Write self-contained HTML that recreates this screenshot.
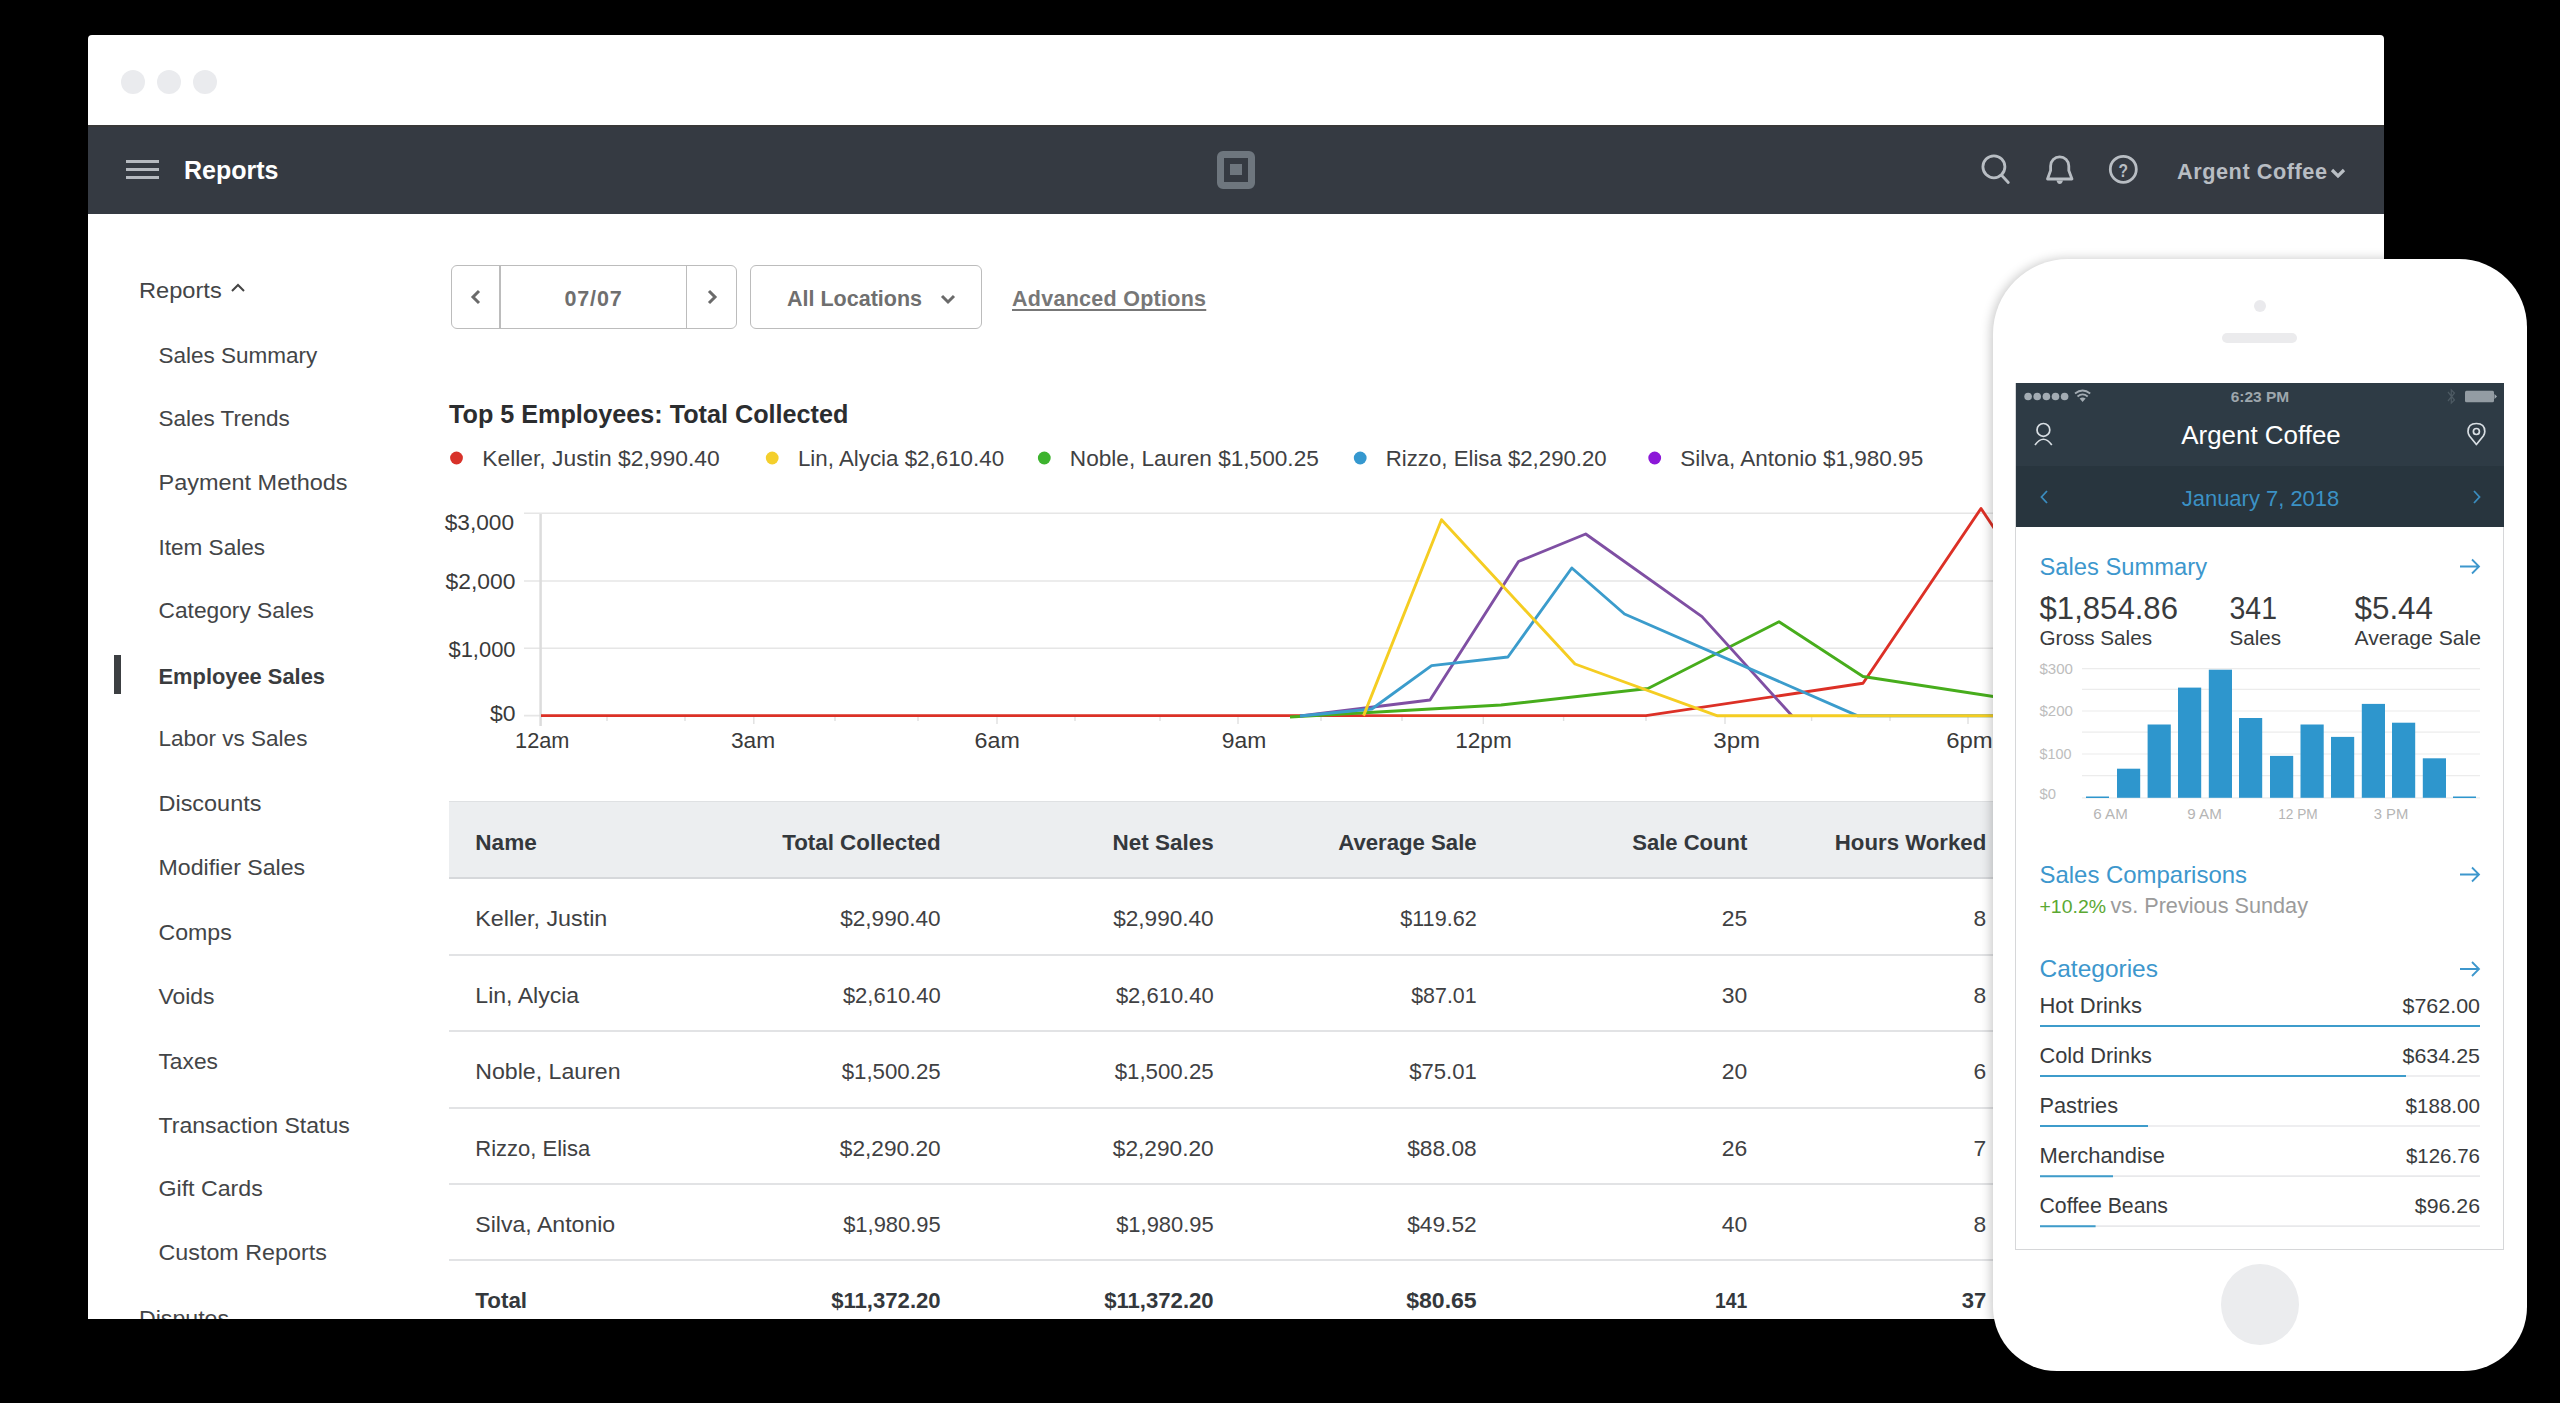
<!DOCTYPE html>
<html><head><meta charset="utf-8">
<style>
*{margin:0;padding:0;box-sizing:border-box}
html,body{width:2560px;height:1403px;overflow:hidden;background:#000}
body{position:relative;font-family:"Liberation Sans",sans-serif}
.a{position:absolute;white-space:nowrap}
#win{position:absolute;left:88px;top:35px;width:2296px;height:1283.6px;background:#fff;border-radius:4px 4px 0 0;overflow:hidden}
#wi{position:absolute;left:-88px;top:-35px;width:2560px;height:1403px}
.dot{position:absolute;width:24px;height:24px;border-radius:50%;background:#eaebee;top:69.5px}
#nav{position:absolute;left:88px;top:125px;width:2296px;height:89px;background:#353a42;border-top:2px solid #383838}
.side{position:absolute;left:158px;font-size:23px;color:#434547;line-height:30px;height:30px}
</style></head><body>
<div id="win"><div id="wi">
  <div class="dot" style="left:121.3px"></div>
  <div class="dot" style="left:157.4px"></div>
  <div class="dot" style="left:193.2px"></div>
  <div id="nav"></div>
  <!-- hamburger -->
  <div class="a" style="left:126.2px;top:160px;width:32.6px;height:3px;background:#b6bac0"></div>
  <div class="a" style="left:126.2px;top:168px;width:32.6px;height:3px;background:#b6bac0"></div>
  <div class="a" style="left:126.2px;top:176px;width:32.6px;height:3px;background:#b6bac0"></div>
  <div class="a" style="left:184px;top:155px;line-height:30px;font-size:25px;font-weight:bold;color:#fff">Reports</div>
  <!-- square logo -->
  <div class="a" style="left:1217px;top:150.5px;width:38px;height:38px;border:7.5px solid #6e767e;border-radius:6px"></div>
  <div class="a" style="left:1230px;top:164px;width:11.5px;height:11px;background:#6e767e"></div>
  <!-- nav icons -->
  <svg class="a" style="left:1960px;top:140px" width="200" height="60" viewBox="1960 140 200 60">
    <g fill="none" stroke="#b8bdc3" stroke-width="2.8" stroke-linecap="round">
      <circle cx="1993.9" cy="166.8" r="11"/>
      <line x1="2001.8" y1="175.5" x2="2008.3" y2="182.5"/>
      <path d="M2047.5 179 L2050.6 170.5 L2050.6 166 A9.1 9.1 0 0 1 2068.8 166 L2068.8 170.5 L2072 179 Z" stroke-linejoin="round"/>
      <circle cx="2123.3" cy="169.3" r="13"/>
    </g>
    <path d="M2056.5 180.5 L2063 180.5 Q2062 184 2059.7 184 Q2057.4 184 2056.5 180.5Z" fill="#b8bdc3"/>
    <text x="2123.3" y="176.8" font-family="Liberation Sans" font-weight="bold" font-size="19" fill="#b8bdc3" text-anchor="middle" textLength="9.5" lengthAdjust="spacingAndGlyphs">?</text>
  </svg>
  <div class="a" style="left:2177px;top:157px;line-height:30px;font-size:21.7px;font-weight:bold;letter-spacing:0.55px;color:#b8bdc3">Argent Coffee</div>
  <svg class="a" style="left:2330px;top:166.5px" width="16" height="12" viewBox="0 0 16 12"><path d="M2 3 L8 9 L14 3" fill="none" stroke="#b9bec4" stroke-width="3.2"/></svg>

  <!-- sidebar -->
  <svg class="a" style="left:100px;top:260px" width="300" height="1080" viewBox="100 260 300 1080">
    <g font-family="Liberation Sans" font-size="21.5" fill="#434547">
      <text x="139" y="298" textLength="82.7" lengthAdjust="spacingAndGlyphs">Reports</text>
      <text x="158.5" y="362.6" textLength="158.8" lengthAdjust="spacingAndGlyphs">Sales Summary</text>
      <text x="158.5" y="425.6" textLength="131.2" lengthAdjust="spacingAndGlyphs">Sales Trends</text>
      <text x="158.5" y="489.7" textLength="189.1" lengthAdjust="spacingAndGlyphs">Payment Methods</text>
      <text x="158.5" y="554.9" textLength="106.5" lengthAdjust="spacingAndGlyphs">Item Sales</text>
      <text x="158.5" y="617.9" textLength="155.5" lengthAdjust="spacingAndGlyphs">Category Sales</text>
      <text x="158.5" y="745.6" textLength="148.9" lengthAdjust="spacingAndGlyphs">Labor vs Sales</text>
      <text x="158.5" y="810.8" textLength="102.9" lengthAdjust="spacingAndGlyphs">Discounts</text>
      <text x="158.5" y="874.9" textLength="146.7" lengthAdjust="spacingAndGlyphs">Modifier Sales</text>
      <text x="158.5" y="940.1" textLength="73.3" lengthAdjust="spacingAndGlyphs">Comps</text>
      <text x="158.5" y="1003.8" textLength="56.1" lengthAdjust="spacingAndGlyphs">Voids</text>
      <text x="158.5" y="1068.9" textLength="59.4" lengthAdjust="spacingAndGlyphs">Taxes</text>
      <text x="158.5" y="1133.0" textLength="191.3" lengthAdjust="spacingAndGlyphs">Transaction Status</text>
      <text x="158.5" y="1196.0" textLength="104.3" lengthAdjust="spacingAndGlyphs">Gift Cards</text>
      <text x="158.5" y="1260.1" textLength="168.3" lengthAdjust="spacingAndGlyphs">Custom Reports</text>
      <text x="139" y="1326" textLength="90" lengthAdjust="spacingAndGlyphs">Disputes</text>
    </g>
    <text x="158.5" y="683.8" font-family="Liberation Sans" font-size="21.3" font-weight="bold" fill="#3a3c3e" textLength="166.5" lengthAdjust="spacingAndGlyphs">Employee Sales</text>
  </svg>
  <svg class="a" style="left:229px;top:281px" width="18" height="14" viewBox="0 0 18 14"><path d="M3 10 L9 4 L15 10" fill="none" stroke="#444" stroke-width="2"/></svg>
  <div class="a" style="left:114px;top:655px;width:7px;height:39px;background:#3c3f42"></div>
  <!-- controls -->
  <div class="a" style="left:450.5px;top:265.3px;width:286px;height:63.3px;border:1.7px solid #bcbcbc;border-radius:6px"></div>
  <div class="a" style="left:499.2px;top:266px;width:1.7px;height:62px;background:#bcbcbc"></div>
  <div class="a" style="left:685.8px;top:266px;width:1.7px;height:62px;background:#bcbcbc"></div>
  <svg class="a" style="left:466px;top:287px" width="20" height="20" viewBox="0 0 20 20"><path d="M13 4 L7 10 L13 16" fill="none" stroke="#6a6a6a" stroke-width="3"/></svg>
  <svg class="a" style="left:702px;top:287px" width="20" height="20" viewBox="0 0 20 20"><path d="M7 4 L13 10 L7 16" fill="none" stroke="#6a6a6a" stroke-width="3"/></svg>
  <div class="a" style="left:501px;top:284px;width:185px;text-align:center;line-height:30px;font-size:21.5px;font-weight:bold;letter-spacing:0.8px;color:#6f6f6f">07/07</div>
  <div class="a" style="left:750px;top:265.3px;width:232px;height:63.3px;border:1.7px solid #bcbcbc;border-radius:6px"></div>
  <div class="a" style="left:787px;top:284px;line-height:30px;font-size:21.5px;font-weight:bold;color:#6f6f6f">All Locations</div>
  <svg class="a" style="left:939px;top:291.5px" width="18" height="14" viewBox="0 0 18 14"><path d="M3 4 L9 10 L15 4" fill="none" stroke="#6a6a6a" stroke-width="3"/></svg>
  <div class="a" style="left:1012px;top:284px;line-height:30px;font-size:21.5px;font-weight:bold;letter-spacing:0.27px;color:#777;text-decoration:underline;text-decoration-thickness:1.5px;text-underline-offset:3px;text-decoration-skip-ink:none">Advanced Options</div>

  <!-- chart -->
  <div class="a" style="left:449px;top:399px;line-height:30px;font-size:25.2px;font-weight:bold;color:#2b2d2f">Top 5 Employees: Total Collected</div>
  <svg class="a" style="left:440px;top:440px" width="1500" height="36" viewBox="440 440 1500 36">
    <circle cx="456.5" cy="458" r="6.4" fill="#d8322a"/>
    <text x="482.2" y="466" font-family="Liberation Sans" font-size="22.7" fill="#3f4143" textLength="237.5" lengthAdjust="spacingAndGlyphs">Keller, Justin $2,990.40</text>
    <circle cx="772.2" cy="458" r="6.4" fill="#f4cf2c"/>
    <text x="797.9000000000001" y="466" font-family="Liberation Sans" font-size="22.7" fill="#3f4143" textLength="206.2" lengthAdjust="spacingAndGlyphs">Lin, Alycia $2,610.40</text>
    <circle cx="1044.3" cy="458" r="6.4" fill="#3db32e"/>
    <text x="1069.8" y="466" font-family="Liberation Sans" font-size="22.7" fill="#3f4143" textLength="249.0" lengthAdjust="spacingAndGlyphs">Noble, Lauren $1,500.25</text>
    <circle cx="1360.2" cy="458" r="6.4" fill="#3598cf"/>
    <text x="1385.8" y="466" font-family="Liberation Sans" font-size="22.7" fill="#3f4143" textLength="220.9" lengthAdjust="spacingAndGlyphs">Rizzo, Elisa $2,290.20</text>
    <circle cx="1654.7" cy="458" r="6.4" fill="#8c18d8"/>
    <text x="1680.2" y="466" font-family="Liberation Sans" font-size="22.7" fill="#3f4143" textLength="243.0" lengthAdjust="spacingAndGlyphs">Silva, Antonio $1,980.95</text>
  </svg>
  <svg class="a" style="left:420px;top:490px" width="1580" height="280" viewBox="420 490 1580 280">
    <g stroke="#e6e6e6" stroke-width="1.6">
      <line x1="524" y1="513.2" x2="2000" y2="513.2"/>
      <line x1="524" y1="581" x2="2000" y2="581"/>
      <line x1="524" y1="648.3" x2="2000" y2="648.3"/>
      <line x1="524" y1="715.6" x2="2000" y2="715.6"/>
    </g>
    <line x1="540.6" y1="514" x2="540.6" y2="726" stroke="#dcdcdc" stroke-width="2.5"/>
    <g stroke="#e0e0e0" stroke-width="1.4">
      <line x1="607" y1="716" x2="607" y2="721"/><line x1="685" y1="716" x2="685" y2="721"/>
      <line x1="753.8" y1="716" x2="753.8" y2="724"/>
      <line x1="835" y1="716" x2="835" y2="721"/><line x1="918" y1="716" x2="918" y2="721"/>
      <line x1="997" y1="716" x2="997" y2="724"/>
      <line x1="1075" y1="716" x2="1075" y2="721"/><line x1="1160" y1="716" x2="1160" y2="721"/>
      <line x1="1238" y1="716" x2="1238" y2="724"/>
      <line x1="1321" y1="716" x2="1321" y2="721"/><line x1="1402" y1="716" x2="1402" y2="721"/>
      <line x1="1483.3" y1="716" x2="1483.3" y2="724"/>
      <line x1="1563.6" y1="716" x2="1563.6" y2="721"/><line x1="1646" y1="716" x2="1646" y2="721"/>
      <line x1="1725" y1="716" x2="1725" y2="724"/>
      <line x1="1811.6" y1="716" x2="1811.6" y2="721"/><line x1="1890" y1="716" x2="1890" y2="721"/>
      <line x1="1968" y1="716" x2="1968" y2="724"/>
    </g>
    <g fill="none" stroke-width="2.9" stroke-linejoin="round">
            <polyline stroke="#dc3026" points="541,715.6 1646,715.6 1863,683.3 1981,508.5 2000,537"/>
      <polyline stroke="#47ad1c" points="1290,717 1501,705 1648,688.5 1779,621.7 1863,676.5 2000,697.5"/>
      <polyline stroke="#7f4fa3" points="1300,716 1430,700 1518.5,561.5 1585.7,534 1702,616.6 1792,715.8"/>
      <polyline stroke="#3b9ccc" points="1300,716 1371.8,709 1431.6,665.6 1507.9,657 1571.8,568 1624.5,614 1857.8,715.8 2000,715.8"/>
      <polyline stroke="#f5cd22" points="1363.6,715.6 1441.5,519.7 1575,664 1717.5,715.8 2000,715.8"/>
    </g>
    <g font-family="Liberation Sans" font-size="21.5" fill="#3a3a3a" text-anchor="end">
      <text x="514" y="529.5" textLength="69.3" lengthAdjust="spacingAndGlyphs">$3,000</text>
      <text x="515.5" y="588.5" textLength="69.9" lengthAdjust="spacingAndGlyphs">$2,000</text>
      <text x="515.5" y="657" textLength="67" lengthAdjust="spacingAndGlyphs">$1,000</text>
      <text x="515.5" y="720.5" textLength="25.5" lengthAdjust="spacingAndGlyphs">$0</text>
    </g>
    <g font-family="Liberation Sans" font-size="21.5" fill="#3a3a3a" text-anchor="middle">
      <text x="542.3" y="748" textLength="54.4" lengthAdjust="spacingAndGlyphs">12am</text>
      <text x="753" y="748" textLength="44.2" lengthAdjust="spacingAndGlyphs">3am</text>
      <text x="997.2" y="748" textLength="45.2" lengthAdjust="spacingAndGlyphs">6am</text>
      <text x="1244" y="748" textLength="44.5" lengthAdjust="spacingAndGlyphs">9am</text>
      <text x="1483.5" y="748" textLength="56.5" lengthAdjust="spacingAndGlyphs">12pm</text>
      <text x="1736.7" y="748" textLength="46.9" lengthAdjust="spacingAndGlyphs">3pm</text>
      <text x="1969.5" y="748" textLength="46.5" lengthAdjust="spacingAndGlyphs">6pm</text>
    </g>
  </svg>

  <!-- table -->
  <div class="a" style="left:449px;top:801px;width:1560px;height:78px;background:#eceef0;border-top:1.5px solid #dfe1e3;border-bottom:2px solid #d6d8db"></div>
  <div class="a" style="left:449px;top:953.7px;width:1560px;height:2px;background:#e2e3e5"></div>
  <div class="a" style="left:449px;top:1030.0px;width:1560px;height:2px;background:#e2e3e5"></div>
  <div class="a" style="left:449px;top:1106.8px;width:1560px;height:2px;background:#e2e3e5"></div>
  <div class="a" style="left:449px;top:1182.8px;width:1560px;height:2px;background:#e2e3e5"></div>
  <div class="a" style="left:449px;top:1259.0px;width:1560px;height:2px;background:#e2e3e5"></div>
  <svg class="a" style="left:440px;top:800px" width="1560" height="520" viewBox="440 800 1560 520">
    <g font-family="Liberation Sans">
      <text x="475.3" y="849.8" font-weight="bold" font-size="21.4" fill="#34383c" textLength="61.5" lengthAdjust="spacingAndGlyphs">Name</text>
      <text x="940.7" y="849.8" text-anchor="end" font-weight="bold" font-size="21.4" fill="#34383c" textLength="158.5" lengthAdjust="spacingAndGlyphs">Total Collected</text>
      <text x="1213.7" y="849.8" text-anchor="end" font-weight="bold" font-size="21.4" fill="#34383c" textLength="101.1" lengthAdjust="spacingAndGlyphs">Net Sales</text>
      <text x="1476.7" y="849.8" text-anchor="end" font-weight="bold" font-size="21.4" fill="#34383c" textLength="138.5" lengthAdjust="spacingAndGlyphs">Average Sale</text>
      <text x="1747.3" y="849.8" text-anchor="end" font-weight="bold" font-size="21.4" fill="#34383c" textLength="115.1" lengthAdjust="spacingAndGlyphs">Sale Count</text>
      <text x="1986.3" y="849.8" text-anchor="end" font-weight="bold" font-size="21.4" fill="#34383c" textLength="151.5" lengthAdjust="spacingAndGlyphs">Hours Worked</text>
      <text x="475.3" y="926.2" font-size="22.4" fill="#3f4143" textLength="132.0" lengthAdjust="spacingAndGlyphs">Keller, Justin</text>
      <text x="940.7" y="926.2" text-anchor="end" font-size="22.4" fill="#3f4143" textLength="100.5" lengthAdjust="spacingAndGlyphs">$2,990.40</text>
      <text x="1213.7" y="926.2" text-anchor="end" font-size="22.4" fill="#3f4143" textLength="100.5" lengthAdjust="spacingAndGlyphs">$2,990.40</text>
      <text x="1476.7" y="926.2" text-anchor="end" font-size="22.4" fill="#3f4143" textLength="76.5" lengthAdjust="spacingAndGlyphs">$119.62</text>
      <text x="1747.3" y="926.2" text-anchor="end" font-size="22.4" fill="#3f4143" textLength="25.5" lengthAdjust="spacingAndGlyphs">25</text>
      <text x="1986.3" y="926.2" text-anchor="end" font-size="22.4" fill="#3f4143" textLength="12.7" lengthAdjust="spacingAndGlyphs">8</text>
      <text x="475.3" y="1002.7" font-size="22.4" fill="#3f4143" textLength="103.9" lengthAdjust="spacingAndGlyphs">Lin, Alycia</text>
      <text x="940.7" y="1002.7" text-anchor="end" font-size="22.4" fill="#3f4143" textLength="97.8" lengthAdjust="spacingAndGlyphs">$2,610.40</text>
      <text x="1213.7" y="1002.7" text-anchor="end" font-size="22.4" fill="#3f4143" textLength="97.8" lengthAdjust="spacingAndGlyphs">$2,610.40</text>
      <text x="1476.7" y="1002.7" text-anchor="end" font-size="22.4" fill="#3f4143" textLength="65.5" lengthAdjust="spacingAndGlyphs">$87.01</text>
      <text x="1747.3" y="1002.7" text-anchor="end" font-size="22.4" fill="#3f4143" textLength="25.5" lengthAdjust="spacingAndGlyphs">30</text>
      <text x="1986.3" y="1002.7" text-anchor="end" font-size="22.4" fill="#3f4143" textLength="12.7" lengthAdjust="spacingAndGlyphs">8</text>
      <text x="475.3" y="1079.2" font-size="22.4" fill="#3f4143" textLength="145.3" lengthAdjust="spacingAndGlyphs">Noble, Lauren</text>
      <text x="940.7" y="1079.2" text-anchor="end" font-size="22.4" fill="#3f4143" textLength="99.0" lengthAdjust="spacingAndGlyphs">$1,500.25</text>
      <text x="1213.7" y="1079.2" text-anchor="end" font-size="22.4" fill="#3f4143" textLength="99.0" lengthAdjust="spacingAndGlyphs">$1,500.25</text>
      <text x="1476.7" y="1079.2" text-anchor="end" font-size="22.4" fill="#3f4143" textLength="67.5" lengthAdjust="spacingAndGlyphs">$75.01</text>
      <text x="1747.3" y="1079.2" text-anchor="end" font-size="22.4" fill="#3f4143" textLength="25.5" lengthAdjust="spacingAndGlyphs">20</text>
      <text x="1986.3" y="1079.2" text-anchor="end" font-size="22.4" fill="#3f4143" textLength="12.7" lengthAdjust="spacingAndGlyphs">6</text>
      <text x="475.3" y="1155.7" font-size="22.4" fill="#3f4143" textLength="114.9" lengthAdjust="spacingAndGlyphs">Rizzo, Elisa</text>
      <text x="940.7" y="1155.7" text-anchor="end" font-size="22.4" fill="#3f4143" textLength="100.9" lengthAdjust="spacingAndGlyphs">$2,290.20</text>
      <text x="1213.7" y="1155.7" text-anchor="end" font-size="22.4" fill="#3f4143" textLength="100.9" lengthAdjust="spacingAndGlyphs">$2,290.20</text>
      <text x="1476.7" y="1155.7" text-anchor="end" font-size="22.4" fill="#3f4143" textLength="69.5" lengthAdjust="spacingAndGlyphs">$88.08</text>
      <text x="1747.3" y="1155.7" text-anchor="end" font-size="22.4" fill="#3f4143" textLength="25.5" lengthAdjust="spacingAndGlyphs">26</text>
      <text x="1986.3" y="1155.7" text-anchor="end" font-size="22.4" fill="#3f4143" textLength="12.7" lengthAdjust="spacingAndGlyphs">7</text>
      <text x="475.3" y="1232.2" font-size="22.4" fill="#3f4143" textLength="139.9" lengthAdjust="spacingAndGlyphs">Silva, Antonio</text>
      <text x="940.7" y="1232.2" text-anchor="end" font-size="22.4" fill="#3f4143" textLength="97.5" lengthAdjust="spacingAndGlyphs">$1,980.95</text>
      <text x="1213.7" y="1232.2" text-anchor="end" font-size="22.4" fill="#3f4143" textLength="97.5" lengthAdjust="spacingAndGlyphs">$1,980.95</text>
      <text x="1476.7" y="1232.2" text-anchor="end" font-size="22.4" fill="#3f4143" textLength="69.5" lengthAdjust="spacingAndGlyphs">$49.52</text>
      <text x="1747.3" y="1232.2" text-anchor="end" font-size="22.4" fill="#3f4143" textLength="25.5" lengthAdjust="spacingAndGlyphs">40</text>
      <text x="1986.3" y="1232.2" text-anchor="end" font-size="22.4" fill="#3f4143" textLength="12.7" lengthAdjust="spacingAndGlyphs">8</text>
      <text x="475.3" y="1308.3" font-weight="bold" font-size="21.4" fill="#34383c" textLength="51.8" lengthAdjust="spacingAndGlyphs">Total</text>
      <text x="940.7" y="1308.3" text-anchor="end" font-weight="bold" font-size="21.4" fill="#34383c" textLength="109.5" lengthAdjust="spacingAndGlyphs">$11,372.20</text>
      <text x="1213.7" y="1308.3" text-anchor="end" font-weight="bold" font-size="21.4" fill="#34383c" textLength="109.5" lengthAdjust="spacingAndGlyphs">$11,372.20</text>
      <text x="1476.7" y="1308.3" text-anchor="end" font-weight="bold" font-size="21.4" fill="#34383c" textLength="70.5" lengthAdjust="spacingAndGlyphs">$80.65</text>
      <text x="1747.3" y="1308.3" text-anchor="end" font-weight="bold" font-size="21.4" fill="#34383c" textLength="32.3" lengthAdjust="spacingAndGlyphs">141</text>
      <text x="1986.3" y="1308.3" text-anchor="end" font-weight="bold" font-size="21.4" fill="#34383c" textLength="24.5" lengthAdjust="spacingAndGlyphs">37</text>
    </g>
  </svg>
</div></div>

<!-- phone -->
<div class="a" style="left:1993px;top:258.5px;width:533.5px;height:1112px;background:#fff;border-radius:75px 68px 64px 64px;box-shadow:-2px 0 11px rgba(0,0,0,0.22)"></div>
<div class="a" style="left:2254px;top:299.5px;width:12px;height:12px;border-radius:50%;background:#eaeaed"></div>
<div class="a" style="left:2222px;top:332.5px;width:74.5px;height:10px;border-radius:5px;background:#ebebed"></div>
<div class="a" style="left:2221px;top:1263.5px;width:77.7px;height:81px;border-radius:50%;background:#ebecee"></div>
<div class="a" style="left:2014.6px;top:383.3px;width:489.8px;height:866.3px;background:#fff;border:1.4px solid #d6d7d9;border-top:none"></div>
<div class="a" style="left:2015.5px;top:383.3px;width:488.5px;height:82.5px;background:#2e3b45"></div>
<div class="a" style="left:2015.5px;top:465.8px;width:488.5px;height:61.2px;background:#28353e"></div>
<svg class="a" style="left:2015px;top:383px" width="490" height="145" viewBox="2015 383 490 145">
  <g fill="#a3acb3">
    <circle cx="2028.1" cy="396.5" r="3.8"/><circle cx="2037.2" cy="396.5" r="3.8"/><circle cx="2046.4" cy="396.5" r="3.8"/><circle cx="2055.5" cy="396.5" r="3.8"/><circle cx="2064.6" cy="396.5" r="3.8"/>
    <path d="M2082.6 402 L2079.6 398.6 Q2082.6 396.4 2085.6 398.6 Z"/>
    <rect x="2465" y="390.8" width="29" height="11.5" rx="1.5" fill="#939ca3"/>
    <path d="M2494.5 394 L2497 396.5 L2494.5 399 Z"/>
  </g>
  <g fill="none" stroke="#a3acb3" stroke-width="1.8">
    <path d="M2077.5 396.5 Q2082.6 392.3 2087.7 396.5"/>
    <path d="M2075 393.5 Q2082.6 387.5 2090.2 393.5"/>
  </g>
  <path d="M2448 392 L2454.5 400 L2451.3 403 L2451.3 390 L2454.5 393 L2448 401" fill="none" stroke="#4d5a63" stroke-width="1.2"/>
  <text x="2260" y="401.5" font-family="Liberation Sans" font-size="15" font-weight="bold" fill="#9ea7ad" text-anchor="middle" textLength="58.5" lengthAdjust="spacingAndGlyphs">6:23 PM</text>
  <g fill="none" stroke="#d8dee3" stroke-width="1.7">
    <circle cx="2043.4" cy="429.9" r="6.4"/>
    <path d="M2035 445 Q2043.4 433.5 2051.8 445"/>
    <path d="M2476.4 444.5 L2469.5 436 Q2468 433.5 2468 431.5 Q2468 423.5 2476.4 423.5 Q2484.8 423.5 2484.8 431.5 Q2484.8 433.5 2483.3 436 Z" stroke-linejoin="round"/>
    <circle cx="2476.4" cy="431.5" r="3"/>
  </g>
  <g fill="none" stroke="#3a8cbf" stroke-width="1.8">
    <path d="M2047 491 L2041.5 497 L2047 503"/>
    <path d="M2474 491 L2479.5 497 L2474 503"/>
  </g>
  <text x="2261" y="443.5" font-family="Liberation Sans" font-size="25.7" fill="#ffffff" text-anchor="middle" textLength="159.5" lengthAdjust="spacingAndGlyphs">Argent Coffee</text>
  <text x="2260.5" y="505.5" font-family="Liberation Sans" font-size="21.8" fill="#3b91c5" text-anchor="middle" textLength="157.5" lengthAdjust="spacingAndGlyphs">January 7, 2018</text>
</svg>

<svg class="a" style="left:2016px;top:528px" width="488" height="720" viewBox="2016 528 488 720">
  <g font-family="Liberation Sans">
    <text x="2039.5" y="574.5" font-size="23.5" fill="#3d97cd" textLength="167.5" lengthAdjust="spacingAndGlyphs">Sales Summary</text>
    <text x="2039.5" y="618.5" font-size="30.8" fill="#393b3d" textLength="138.5" lengthAdjust="spacingAndGlyphs">$1,854.86</text>
    <text x="2229.5" y="618.5" font-size="30.8" fill="#393b3d" textLength="47.5" lengthAdjust="spacingAndGlyphs">341</text>
    <text x="2354.5" y="618.5" font-size="30.8" fill="#393b3d" textLength="78.5" lengthAdjust="spacingAndGlyphs">$5.44</text>
    <text x="2039.5" y="644.5" font-size="20.4" fill="#393b3d" textLength="112.5" lengthAdjust="spacingAndGlyphs">Gross Sales</text>
    <text x="2229.5" y="644.5" font-size="20" fill="#393b3d" textLength="51.5" lengthAdjust="spacingAndGlyphs">Sales</text>
    <text x="2354.5" y="644.5" font-size="20.9" fill="#393b3d" textLength="126.5" lengthAdjust="spacingAndGlyphs">Average Sale</text>
    <g font-size="14.4" fill="#bdbdbd">
      <text x="2039.5" y="674" textLength="33.5" lengthAdjust="spacingAndGlyphs">$300</text>
      <text x="2039.5" y="716" textLength="33.5" lengthAdjust="spacingAndGlyphs">$200</text>
      <text x="2039.5" y="758.5" textLength="32.0" lengthAdjust="spacingAndGlyphs">$100</text>
      <text x="2039.5" y="799" textLength="16.5" lengthAdjust="spacingAndGlyphs">$0</text>
    </g>
    <g font-size="14.4" fill="#b5b5b5" text-anchor="middle">
      <text x="2110.5" y="819" textLength="34.5" lengthAdjust="spacingAndGlyphs">6 AM</text>
      <text x="2204.5" y="819" textLength="34.5" lengthAdjust="spacingAndGlyphs">9 AM</text>
      <text x="2298" y="819" textLength="39.5" lengthAdjust="spacingAndGlyphs">12 PM</text>
      <text x="2391" y="819" textLength="34.5" lengthAdjust="spacingAndGlyphs">3 PM</text>
    </g>
    <text x="2039.5" y="882.5" font-size="23.8" fill="#3d97cd" textLength="207.5" lengthAdjust="spacingAndGlyphs">Sales Comparisons</text>
    <text x="2039.5" y="913" font-size="19" fill="#5aa832" textLength="66.5" lengthAdjust="spacingAndGlyphs">+10.2%</text>
    <text x="2110.5" y="913" font-size="21.5" fill="#9b9b9b" textLength="197.5" lengthAdjust="spacingAndGlyphs">vs. Previous Sunday</text>
    <text x="2039.5" y="977" font-size="24.2" fill="#3d97cd" textLength="118.5" lengthAdjust="spacingAndGlyphs">Categories</text>
    <g font-size="21.3" fill="#393b3d">
      <text x="2039.5" y="1013" textLength="102.5" lengthAdjust="spacingAndGlyphs">Hot Drinks</text>
      <text x="2039.5" y="1063" textLength="112.5" lengthAdjust="spacingAndGlyphs">Cold Drinks</text>
      <text x="2039.5" y="1113" textLength="78.5" lengthAdjust="spacingAndGlyphs">Pastries</text>
      <text x="2039.5" y="1163" textLength="125.5" lengthAdjust="spacingAndGlyphs">Merchandise</text>
      <text x="2039.5" y="1213" textLength="128.5" lengthAdjust="spacingAndGlyphs">Coffee Beans</text>
    </g>
    <g font-size="21" fill="#393b3d" text-anchor="end">
      <text x="2480" y="1013" textLength="77.5" lengthAdjust="spacingAndGlyphs">$762.00</text>
      <text x="2480" y="1063" textLength="77.5" lengthAdjust="spacingAndGlyphs">$634.25</text>
      <text x="2480" y="1113" textLength="74.5" lengthAdjust="spacingAndGlyphs">$188.00</text>
      <text x="2480" y="1163" textLength="74.1" lengthAdjust="spacingAndGlyphs">$126.76</text>
      <text x="2480" y="1213" textLength="65.2" lengthAdjust="spacingAndGlyphs">$96.26</text>
    </g>
  </g>
  <g stroke="#3d97cd" stroke-width="1.8" fill="none">
    <path d="M2460 566.5 L2479 566.5 M2472 559.5 L2479 566.5 L2472 573.5"/>
    <path d="M2460 874.5 L2479 874.5 M2472 867.5 L2479 874.5 L2472 881.5"/>
    <path d="M2460 969 L2479 969 M2472 962 L2479 969 L2472 976"/>
  </g>
  <g stroke="#ececec" stroke-width="1.2">
    <line x1="2082" y1="668.6" x2="2480" y2="668.6"/>
    <line x1="2082" y1="689.3" x2="2480" y2="689.3"/>
    <line x1="2082" y1="711" x2="2480" y2="711"/>
    <line x1="2082" y1="732.2" x2="2480" y2="732.2"/>
    <line x1="2082" y1="754" x2="2480" y2="754"/>
    <line x1="2082" y1="775.7" x2="2480" y2="775.7"/>
    <line x1="2082" y1="797.8" x2="2480" y2="797.8"/>
  </g>
  <g fill="#2e96cd"><rect x="2117.0" y="768.7" width="23.2" height="29.1"/><rect x="2147.6" y="724.5" width="23.2" height="73.3"/><rect x="2178.0" y="687.6" width="23.2" height="110.2"/><rect x="2208.8" y="669.7" width="23.2" height="128.1"/><rect x="2239.0" y="718.0" width="23.2" height="79.8"/><rect x="2270.0" y="755.9" width="23.2" height="41.9"/><rect x="2300.5" y="724.5" width="23.2" height="73.3"/><rect x="2331.0" y="736.9" width="23.2" height="60.9"/><rect x="2361.8" y="703.9" width="23.2" height="93.9"/><rect x="2392.0" y="722.7" width="23.2" height="75.1"/><rect x="2422.8" y="758.3" width="23.2" height="39.5"/>
    <rect x="2086" y="796.5" width="23" height="1.5"/>
    <rect x="2453" y="796.5" width="23" height="1.5"/>
  </g>
  <g stroke="#e8e9eb" stroke-width="1.7">
    <line x1="2040" y1="1076" x2="2480" y2="1076"/>
    <line x1="2040" y1="1126" x2="2480" y2="1126"/>
    <line x1="2040" y1="1176.2" x2="2480" y2="1176.2"/>
    <line x1="2040" y1="1226.2" x2="2480" y2="1226.2"/>
  </g>
  <g stroke="#3e9ccb" stroke-width="1.9">
    <line x1="2040" y1="1026" x2="2480" y2="1026"/>
    <line x1="2040" y1="1076" x2="2406" y2="1076"/>
    <line x1="2040" y1="1126" x2="2148" y2="1126"/>
    <line x1="2040" y1="1176.2" x2="2113" y2="1176.2"/>
    <line x1="2040" y1="1226.2" x2="2095.6" y2="1226.2"/>
  </g>
</svg>
</body></html>
